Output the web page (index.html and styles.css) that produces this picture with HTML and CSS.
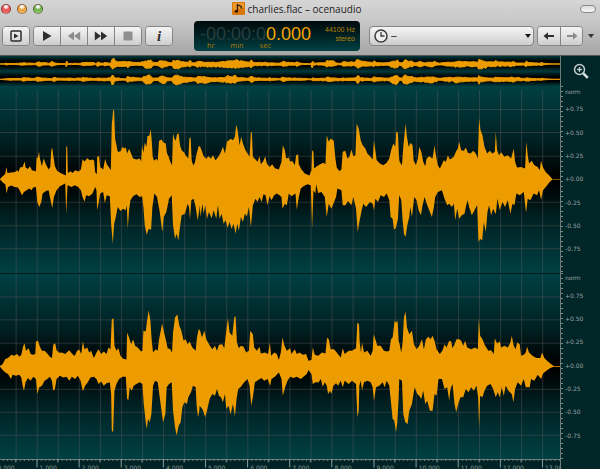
FILE: index.html
```html
<!DOCTYPE html>
<html lang="en">
<head>
<meta charset="utf-8">
<title>charlies.flac – ocenaudio</title>
<link rel="stylesheet" href="styles.css">
</head>
<body>
<header class="chrome">
  <div class="titlebar">
    <div class="lights">
      <button class="light red" aria-label="Close"></button>
      <button class="light amber" aria-label="Minimize"></button>
      <button class="light green" aria-label="Zoom window"></button>
    </div>
    <h1 class="title">
      <svg class="file-icon" viewBox="0 0 12 12" aria-hidden="true"><rect width="12" height="12" rx="1" fill="#d97708"/><path d="M1 1h10v4L1 8z" fill="#ef9a2c"/><path d="M5 8.500V2.500l3.500 1.500v2" fill="none" stroke="#2c1b08" stroke-width="1.200"/><ellipse cx="4" cy="8.700" rx="1.600" ry="1.300" fill="#2c1b08"/></svg>
      <span>charlies.flac – ocenaudio</span>
    </h1>
    <button class="pill" aria-label="Toggle toolbar"></button>
  </div>
  <div class="toolbar">
    <div class="group">
      <button class="tool" aria-label="Play selection"><svg viewBox="0 0 14 14"><rect x="2" y="2" width="10" height="10" rx="1" fill="none" stroke="#2d2d2d" stroke-width="1.500"/><path d="M5 4.500v5L9.500 7z" fill="#2d2d2d"/></svg></button>
    </div>
    <div class="group">
      <button class="tool" aria-label="Play"><svg viewBox="0 0 14 14"><path d="M3 2v10l8.500-5z" fill="#2d2d2d"/></svg></button>
      <button class="tool" aria-label="Rewind"><svg viewBox="0 0 14 14"><path d="M7 2.500v9L.8 7zM13.200 2.500v9L7 7z" fill="#8c8c8c"/></svg></button>
      <button class="tool" aria-label="Fast forward"><svg viewBox="0 0 14 14"><path d="M.8 2.500v9L7 7zM7 2.500v9L13.200 7z" fill="#2d2d2d"/></svg></button>
      <button class="tool" aria-label="Stop"><svg viewBox="0 0 14 14"><path d="M2.500 2.500h9v9h-9z" fill="#909090"/></svg></button>
    </div>
    <div class="group">
      <button class="tool info" aria-label="Information">i</button>
    </div>
    <div class="lcd">
      <div class="clock">
        <div class="digits"><span class="unlit">-00:00:0</span><span>0.000</span></div>
        <div class="units"><span>hr</span><span>min</span><span>sec</span></div>
      </div>
      <div class="format"><span>44100 Hz</span><span>stereo</span></div>
    </div>
    <label class="history">
      <svg class="clock-icon" viewBox="0 0 14 14" aria-hidden="true"><circle cx="7" cy="7" r="6" fill="#eee" stroke="#3c3c3c" stroke-width="1.500"/><path d="M7 3v4h3.500" fill="none" stroke="#3c3c3c" stroke-width="1.300"/></svg>
      <select aria-label="Position history"><option>–</option></select>
      <svg class="chevron" viewBox="0 0 6 4" aria-hidden="true"><path d="M0 0h6L3 4z" fill="#151515"/></svg>
    </label>
    <div class="group nav">
      <button class="tool" aria-label="Back"><svg viewBox="0 0 14 14"><path d="M1.500 7L6 3.300V6h6v2H6v2.700z" fill="#2d2d2d"/></svg></button>
      <button class="tool" aria-label="Forward"><svg viewBox="0 0 14 14"><path d="M12.500 7L8 3.300V6H2v2h6v2.700z" fill="#8c8c8c"/></svg></button>
    </div>
    <button class="more" aria-label="More"><svg class="chevron" viewBox="0 0 6 4"><path d="M0 0h6L3 4z" fill="#333"/></svg></button>
  </div>
</header>
<main class="editor">
  <section class="tracks">
    <svg class="overview" viewBox="0 0 1683 90" preserveAspectRatio="none" aria-label="Overview">
      <defs>
        <linearGradient id="band" x1="0" y1="0" x2="0" y2="1">
          <stop offset="0" stop-color="#003a3c"/><stop offset=".35" stop-color="#000"/><stop offset=".65" stop-color="#000"/><stop offset="1" stop-color="#003a3c"/>
        </linearGradient>
      </defs>
      <rect width="1683" height="46" fill="url(#band)"/>
      <rect y="46" width="1683" height="44" fill="url(#band)"/>
      <use class="mini" href="#wave-left" transform="translate(0 24) scale(1 .08) translate(0 -267)"/>
      <use class="mini" href="#wave-right" transform="translate(0 70) scale(1 .08) translate(0 -287)"/>
    </svg>
    <svg class="channel" viewBox="0 -12 1683 558" preserveAspectRatio="none" aria-label="Left channel">
      <defs>
        <pattern id="columns" x="47" width="63.300" height="600" patternUnits="userSpaceOnUse"><path d="M0 -12h3v600h-3z" fill="#6a6062" fill-opacity=".38"/></pattern>
      </defs>
      <rect y="-12" width="1683" height="558" fill="url(#columns)"/>
      <path class="row" d="M0 58H1683M0 127H1683M0 198H1683M0 336H1683M0 406H1683M0 475H1683"/>
      <path id="wave-left" class="wave" d="M0 266L8 258 15 252 20 230 22 248 35 247 45 245 52 240 56 245 60 232 68 230 74 214 77 232 84 236 90 228 96 240 108 243 110 203 114 202 117 184 120 205 126 228 131 205 138 222 146 238 151 230 154 180 157 172 160 195 165 228 172 242 185 250 198 256 199 168 202 170 204 248 212 243 218 248 226 240 236 244 243 238 248 207 254 214 262 204 270 210 278 208 283 212 286 245 291 252 292 200 298 198 301 230 310 238 316 206 321 222 328 232 333 240 336 100 338 85 340 58 343 62 346 145 350 165 354 185 362 184 368 170 373 175 378 172 382 190 388 176 394 190 400 205 410 208 420 205 424 214 427 165 431 188 435 158 440 170 443 138 449 136 453 118 456 150 459 200 463 212 470 206 474 212 478 152 486 148 490 156 498 160 502 190 507 200 512 215 517 225 520 130 524 145 528 152 532 132 537 130 541 165 546 180 554 188 558 196 566 205 569 145 573 142 576 210 581 226 586 216 591 190 597 168 601 168 606 180 612 198 620 206 626 198 634 205 640 195 648 210 656 200 662 190 670 170 676 190 682 155 688 150 694 146 700 150 706 140 710 103 714 120 720 165 725 140 730 160 738 180 744 190 750 200 754 125 757 128 760 200 768 208 774 215 780 198 784 222 792 212 797 198 802 220 810 230 818 222 826 234 838 238 846 215 850 165 856 180 860 205 868 202 872 215 878 212 886 225 890 195 896 192 898 222 906 238 916 250 930 256 936 240 938 180 942 185 944 235 952 228 962 222 972 218 978 222 982 135 988 155 994 145 1003 152 1008 205 1012 232 1020 242 1026 238 1030 185 1038 182 1044 205 1050 200 1056 178 1062 198 1068 195 1072 100 1078 115 1084 150 1090 165 1098 175 1104 190 1112 198 1120 208 1124 150 1128 180 1132 210 1142 220 1152 225 1162 218 1170 205 1176 178 1182 160 1188 170 1191 125 1196 128 1199 200 1201 215 1208 225 1212 170 1219 100 1223 140 1228 170 1234 158 1240 165 1243 210 1250 225 1256 205 1260 170 1266 185 1272 215 1278 228 1282 205 1290 198 1300 205 1306 165 1310 195 1316 225 1322 235 1328 222 1334 210 1340 215 1346 195 1352 208 1364 200 1370 185 1376 175 1380 155 1386 180 1394 182 1400 172 1406 188 1414 190 1422 182 1430 190 1436 205 1440 85 1444 120 1450 135 1456 170 1464 190 1472 182 1480 190 1487 185 1490 125 1494 180 1500 195 1506 186 1516 200 1526 195 1536 205 1544 175 1548 215 1554 232 1566 230 1578 235 1582 155 1586 195 1590 220 1598 212 1606 225 1616 230 1622 240 1626 212 1632 232 1640 245 1650 255 1660 266 1683 266V268L1660 268 1652 275 1642 288 1632 300 1626 328 1620 300 1614 315 1604 310 1594 330 1586 325 1581 368 1574 305 1562 315 1552 310 1546 345 1540 340 1534 370 1526 330 1518 350 1510 335 1502 360 1495 325 1490 372 1482 355 1476 375 1470 345 1465 365 1460 425 1454 395 1449 450 1443 445 1438 455 1434 345 1426 360 1418 375 1410 350 1405 330 1400 350 1396 370 1388 375 1380 385 1374 355 1368 390 1364 340 1358 350 1350 340 1344 345 1336 325 1328 300 1316 305 1308 320 1304 350 1298 380 1290 360 1284 345 1276 320 1270 345 1265 375 1258 360 1252 330 1245 320 1238 380 1233 350 1230 380 1224 405 1219 440 1214 430 1210 390 1206 330 1200 315 1199 330 1196 385 1190 412 1184 418 1180 385 1174 380 1170 330 1162 310 1154 320 1144 315 1136 335 1128 325 1124 360 1120 340 1112 335 1100 350 1092 340 1087 360 1080 395 1075 425 1070 355 1062 320 1056 345 1046 332 1038 345 1030 345 1026 300 1014 295 1010 320 1004 335 996 355 988 340 982 380 976 320 966 305 956 308 950 282 948 310 942 300 938 415 934 285 924 282 912 288 904 295 898 320 892 358 888 310 876 318 868 310 862 345 856 340 849 355 846 320 840 315 832 310 824 315 816 330 810 318 804 345 798 315 792 312 786 335 780 320 774 335 768 325 760 345 754 410 748 350 742 378 736 370 730 395 724 380 718 420 713 400 708 430 702 400 696 415 690 395 684 412 678 390 672 400 666 370 660 385 655 345 650 385 642 360 636 384 628 365 622 385 617 345 612 370 608 340 603 380 600 345 599 360 594 390 588 350 582 325 575 330 571 388 568 350 564 340 556 370 546 375 541 410 536 450 531 430 526 445 520 405 516 315 508 325 500 365 492 380 488 425 480 365 472 320 464 310 458 350 454 418 447 415 441 433 435 405 431 350 427 318 420 320 410 312 400 318 392 330 388 360 384 415 381 345 378 360 370 355 362 362 354 350 347 385 343 400 339 460 334 400 330 318 321 315 315 338 310 305 301 310 297 335 292 360 290 300 286 290 278 310 268 318 259 315 254 334 248 320 243 300 235 290 225 285 215 290 203 285 199 370 196 280 180 288 170 300 162 320 157 353 152 330 146 300 138 302 128 310 124 335 118 350 112 335 108 290 100 292 94 300 88 295 80 300 72 305 66 315 60 302 54 292 44 290 34 286 24 290 20 310 16 282 10 278 0 268z"/>
    </svg>
    <svg class="channel" viewBox="0 9 1683 558" preserveAspectRatio="none" aria-label="Right channel">
      <rect y="9" width="1683" height="558" fill="url(#columns)"/>
      <path class="row" d="M0 78H1683M0 147H1683M0 217H1683M0 356H1683M0 425H1683M0 494H1683"/>
      <path id="wave-right" class="wave" d="M0 286L8 280 16 265 24 262 34 252 42 255 52 250 58 258 64 252 70 225 74 218 78 240 86 232 92 250 100 252 106 250 108 212 114 210 120 228 126 240 134 240 142 248 150 258 156 262 160 222 166 217 170 238 178 246 186 245 196 250 208 238 216 248 224 256 232 240 238 236 244 250 249 212 254 235 262 230 268 245 274 240 282 262 290 245 296 235 304 250 312 242 320 250 326 230 332 235 336 145 341 142 344 225 350 240 356 232 362 255 370 264 380 266 382 185 388 200 394 220 400 205 406 225 414 230 424 242 428 240 431 180 438 182 442 150 447 118 452 150 456 210 460 245 468 235 474 240 478 205 484 175 487 158 491 175 498 205 504 232 512 235 517 245 520 185 526 140 533 130 539 165 545 180 552 210 558 205 564 220 570 212 578 230 588 240 592 200 597 175 601 178 607 200 614 180 620 205 628 220 638 235 646 225 652 240 658 222 668 220 674 232 680 180 685 142 690 185 698 195 704 140 708 135 712 215 718 232 724 225 732 228 740 245 748 240 752 180 760 190 764 230 772 240 780 228 784 248 796 245 806 250 811 215 815 255 824 245 832 250 838 268 844 245 849 200 855 225 862 240 872 232 876 250 886 235 892 250 900 245 910 252 920 250 927 270 936 268 940 230 946 252 956 255 968 245 978 248 983 200 988 205 994 235 1004 235 1012 245 1024 260 1030 232 1036 250 1048 240 1058 240 1070 232 1074 155 1079 160 1081 215 1085 245 1088 215 1094 245 1104 240 1114 255 1120 240 1123 190 1128 205 1134 225 1144 225 1154 240 1164 242 1170 240 1175 205 1180 200 1186 150 1191 155 1195 150 1198 210 1201 220 1206 245 1210 215 1214 140 1219 122 1223 170 1230 190 1238 180 1244 220 1252 235 1260 225 1268 205 1274 235 1280 205 1288 198 1294 205 1300 195 1306 210 1312 235 1322 250 1330 238 1336 220 1342 230 1350 210 1356 212 1360 232 1366 220 1372 205 1380 205 1386 210 1392 225 1398 210 1404 230 1416 235 1428 230 1436 235 1439 142 1443 195 1450 205 1458 225 1468 240 1476 238 1484 250 1487 202 1494 218 1502 212 1506 230 1516 225 1526 230 1534 215 1538 195 1544 225 1550 235 1554 215 1562 220 1566 255 1574 252 1580 245 1584 228 1590 245 1600 255 1612 262 1624 262 1629 245 1636 262 1644 270 1654 278 1664 286 1683 286V288L1664 288 1654 292 1642 300 1632 308 1626 325 1616 312 1606 330 1596 325 1592 350 1580 350 1574 325 1566 345 1556 335 1548 355 1543 395 1538 370 1528 360 1520 345 1514 375 1508 350 1502 380 1496 365 1490 380 1482 355 1474 340 1464 345 1456 360 1450 380 1443 375 1440 470 1437 380 1432 345 1424 360 1416 350 1408 365 1400 355 1392 380 1384 380 1377 400 1371 425 1366 400 1360 340 1354 355 1350 390 1344 350 1336 355 1328 325 1318 325 1312 375 1306 370 1300 420 1292 420 1284 390 1278 400 1272 360 1266 385 1260 375 1254 370 1246 350 1238 400 1230 420 1225 460 1218 455 1212 430 1208 330 1200 325 1198 385 1194 455 1190 485 1185 450 1180 445 1176 405 1170 345 1162 330 1156 350 1150 335 1140 345 1130 350 1124 390 1120 350 1114 335 1104 330 1094 335 1088 358 1084 330 1080 345 1078 420 1074 440 1070 340 1058 330 1048 340 1036 330 1030 350 1024 330 1016 345 1010 338 1002 345 996 370 992 360 986 370 982 345 976 335 970 348 964 325 958 335 948 335 940 340 936 310 927 298 922 310 912 318 904 325 892 318 882 322 872 318 864 330 857 350 850 375 846 325 838 305 826 318 816 325 812 345 804 325 794 330 786 322 776 328 766 335 760 380 755 405 750 345 744 325 734 335 724 348 716 355 711 385 706 438 700 400 693 432 687 405 680 415 676 370 670 395 664 380 658 375 652 355 646 375 638 370 630 385 622 420 617 440 612 425 608 415 600 405 599 420 595 440 591 405 588 350 580 345 574 365 566 380 562 400 554 395 548 410 543 455 537 465 531 495 526 470 520 420 516 335 508 340 501 350 497 430 490 455 486 425 480 380 474 335 466 330 460 345 455 430 450 455 445 445 441 475 438 455 432 400 428 340 420 335 410 340 402 345 396 360 390 350 386 388 382 385 378 318 368 318 358 325 350 340 344 360 340 485 336 480 334 370 330 335 320 338 312 345 304 332 296 340 290 325 282 318 272 320 264 335 256 345 249 362 242 330 234 315 226 325 216 318 208 330 200 318 190 320 180 315 170 325 165 355 160 360 156 330 150 318 142 325 134 330 126 345 118 350 112 370 108 325 100 318 92 330 84 322 77 335 72 360 68 345 64 320 58 312 48 315 38 312 33 325 24 310 16 305 8 298 0 288z"/>
    </svg>
    <div class="ruler">
      <svg class="ticks" viewBox="0 0 1683 30" preserveAspectRatio="none" aria-hidden="true">
        <defs>
          <pattern id="major" x="-17" width="126.600" height="30" patternUnits="userSpaceOnUse"><path d="M0 0h3v21h-3zM63 0h3v9h-3z" fill="#8d9a9a"/></pattern>
          <pattern id="minor" x="-17" width="12.660" height="30" patternUnits="userSpaceOnUse"><path d="M0 0h3v5h-3z" fill="#6f8080"/></pattern>
        </defs>
        <path d="M0 0h1683v2H0z" fill="#8d9a9a"/>
        <rect width="1683" height="30" fill="url(#minor)"/>
        <rect width="1683" height="30" fill="url(#major)"/>
      </svg>
      <div class="times"><span>0.000</span><span>1.000</span><span>2.000</span><span>3.000</span><span>4.000</span><span>5.000</span><span>6.000</span><span>7.000</span><span>8.000</span><span>9.000</span><span>10.000</span><span>11.000</span><span>12.000</span><span>13.000</span></div>
    </div>
  </section>
  <aside class="levels">
    <button class="zoom" aria-label="Zoom in"><svg viewBox="0 0 16 16"><circle cx="6.500" cy="6.500" r="5" fill="none" stroke="#c4cccc" stroke-width="1.500"/><path d="M4 6.500h5M6.500 4v5" stroke="#c4cccc" stroke-width="1.300"/><path d="M10.300 10.300l4.500 4.500" stroke="#dde2e2" stroke-width="2.600"/></svg></button>
    <div class="scale"><span>norm</span><span>+0.75</span><span>+0.50</span><span>+0.25</span><span>+0.00</span><span>-0.25</span><span>-0.50</span><span>-0.75</span></div>
    <div class="scale"><span>norm</span><span>+0.75</span><span>+0.50</span><span>+0.25</span><span>+0.00</span><span>-0.25</span><span>-0.50</span><span>-0.75</span></div>
  </aside>
</main>
</body>
</html>
```
FILE: styles.css
```css
* { box-sizing: border-box; }

body {
  margin: 0;
  height: 100vh;
  display: flex;
  flex-direction: column;
  overflow: hidden;
  background: #002b2d;
  font-family: "Liberation Sans", sans-serif;
}

button {
  margin: 0;
  padding: 0;
  border: 0;
  background: none;
  font: inherit;
}

svg { display: block; }

.chrome {
  flex: none;
  background: linear-gradient(#d6d6d6, #c6c6c6 40%, #a6a6a6);
  border-bottom: 1px solid #555;
}

.titlebar {
  display: grid;
  grid-template-columns: 1fr auto 1fr;
  align-items: center;
  height: 18px;
  padding: 0 4px 1px 1px;
}

.lights { display: flex; gap: 6px; }

.light {
  width: 10px;
  height: 10px;
  border-radius: 50%;
  border: 1px solid rgba(60, 30, 20, .55);
}

.red { background: radial-gradient(circle at 50% 20%, #fff 0 12%, #e94a4a 45%, #ff8a80); }
.amber { background: radial-gradient(circle at 50% 20%, #fff 0 12%, #e99a35 45%, #ffd277); }
.green { background: radial-gradient(circle at 50% 20%, #fff 0 12%, #62ac3f 45%, #b4e58a); }

.title {
  display: flex;
  align-items: center;
  gap: 3px;
  margin: 0;
  padding-right: 4px;
  font: 10px/16px "Open Sans", sans-serif;
  color: #1c1c1c;
}

.file-icon { width: 13px; height: 13px; }

.pill {
  justify-self: end;
  width: 16px;
  height: 8px;
  border: 1px solid #8a8a8a;
  border-radius: 4px;
  background: linear-gradient(#ddd, #f6f6f6);
}

.toolbar {
  display: flex;
  align-items: center;
  gap: 3px;
  height: 37px;
  padding: 0 4px 2px 2px;
}

.group {
  display: flex;
  flex: none;
  height: 20px;
  border: 1px solid #858585;
  border-radius: 4px;
  overflow: hidden;
}

.tool {
  display: grid;
  place-items: center;
  width: 26px;
  background: linear-gradient(#f4f4f4, #e2e2e2 50%, #cdcdcd);
}

.tool + .tool { width: 27px; border-left: 1px solid #858585; }
.tool svg { width: 14px; height: 14px; }

.info {
  font: italic bold 15px/16px "Liberation Serif", serif;
  color: #2d2d2d;
}

.lcd {
  display: flex;
  flex: none;
  justify-content: space-between;
  width: 166px;
  height: 30px;
  margin: 0 6px 0 18px;
  padding: 4px 5px 0 6px;
  border-radius: 4px;
  background: linear-gradient(#000a0b, #001f21 45%, #004143);
  color: #f5a300;
}

.digits {
  font: 18px/18px "Liberation Sans", sans-serif;
  white-space: nowrap;
}

.unlit { color: #273d3e; }

.units {
  display: flex;
  gap: 16px;
  padding-left: 7px;
  font: 7px/7px "DejaVu Sans", sans-serif;
  color: #a57709;
}

.format {
  display: flex;
  flex-direction: column;
  align-items: flex-end;
  font-size: 7px;
  line-height: 9px;
  color: #b98408;
}

.history {
  position: relative;
  display: flex;
  flex: 1;
  height: 20px;
}

.history select {
  width: 100%;
  height: 20px;
  margin: 0;
  padding: 0 16px 0 21px;
  border: 1px solid #858585;
  border-radius: 4px;
  appearance: none;
  background: linear-gradient(#f4f4f4, #e2e2e2 50%, #cdcdcd);
  font: 10px/16px "Liberation Sans", sans-serif;
  color: #222;
}

.clock-icon {
  position: absolute;
  top: 3px;
  left: 5px;
  width: 14px;
  height: 14px;
}

.chevron { width: 6px; height: 4px; }

.history .chevron {
  position: absolute;
  top: 8px;
  right: 3px;
}

.nav .tool, .nav .tool + .tool { width: 22px; }

.more { padding: 4px 2px; }

.editor {
  flex: 1;
  min-height: 0;
  display: grid;
  grid-template-columns: minmax(0, 1fr) 40px;
}

.tracks {
  display: grid;
  grid-template-rows: 30px minmax(0, 1fr) minmax(0, 1fr) 10px;
  min-height: 0;
}

.tracks svg { width: 100%; height: 100%; }

.channel {
  background: linear-gradient(#004043, #002022 30%, #000 48%, #000 52%, #002022 70%, #004043);
}

.channel + .channel { border-top: 1px solid #001a1c; }

.row {
  fill: none;
  stroke: #6a6062;
  stroke-opacity: .38;
  stroke-width: 3;
}

.wave { fill: #ed9c00; }

.mini {
  stroke: #ed9c00;
  stroke-width: 1px;
}

.mini, #wave-left, #wave-right { vector-effect: non-scaling-stroke; }

.ruler {
  display: grid;
  overflow: hidden;
  background: #002325;
}

.ticks, .times { grid-area: 1 / 1; }

.times {
  display: flex;
  margin-left: -1%;
  padding-top: 5px;
  font: 6px/7px "DejaVu Sans", sans-serif;
  color: #8d9a9a;
}

.times span {
  flex: 0 0 7.450%;
  padding-left: 3px;
}

.levels {
  display: grid;
  grid-template-rows: 30px minmax(0, 1fr) minmax(0, 1fr) 10px;
  border-left: 1px solid #6f7c7c;
  background: #002628;
}

.zoom {
  display: grid;
  place-items: center;
}

.zoom svg { width: 16px; height: 16px; }

.scale {
  display: grid;
  grid-template-rows: minmax(0, 1fr) repeat(7, minmax(0, 2fr)) minmax(0, 1fr);
  align-items: center;
  background: repeating-linear-gradient(#7d8888 0 1px, transparent 1px 5px) left / 2px 100% no-repeat;
  font: 6px/8px "DejaVu Sans", sans-serif;
  color: #9aa3a3;
}

.scale span { padding-left: 4px; }
```
